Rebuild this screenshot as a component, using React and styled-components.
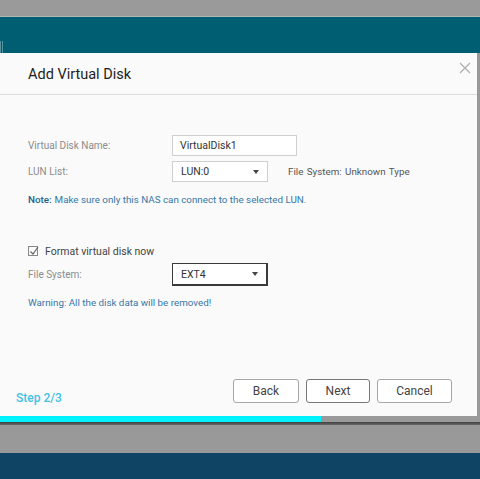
import React from "react";
import styled, { createGlobalStyle } from "styled-components";

const Global = createGlobalStyle`
  html, body { margin: 0; padding: 0; }
  body { width: 480px; height: 479px; overflow: hidden; background: #0f4464; font-family: Roboto, "Liberation Sans", sans-serif; }
`;

const Page = styled.div`
  display: flex;
  flex-direction: column;
  width: 480px;
  height: 479px;
`;

const TopBand = styled.div`
  height: 16px;
  background: #9a9a9a;
  border-bottom: 1px solid #b4b4b4;
`;

const TealBand = styled.div`
  height: 36px;
  background: #005e72;
  position: relative;
`;

const Stage = styled.div`
  display: flex;
  background: #999;
`;

const Dialog = styled.div`
  width: 477px;
  height: 369px;
  background: #fafafa;
  display: flex;
  flex-direction: column;
  position: relative;
`;

const Header = styled.div`
  border-bottom: 1px solid #dcdcdc;
  display: flex;
  align-items: center;
  padding-left: 28px;
  padding-top: 1px;
  box-sizing: border-box;
  height: 42px;
`;

const Title = styled.h1`
  margin: 0;
  font-size: 14.5px;
  font-weight: 400;
  color: #1e1e1e;
`;

const Close = styled.button`
  position: absolute;
  top: 8px;
  right: 5px;
  width: 14px;
  height: 14px;
  border: 0;
  padding: 0;
  background: none;
  display: flex;
`;

const Body = styled.div`
  flex: 1;
  padding: 40px 0 0 28px;
  display: flex;
  flex-direction: column;
`;

const Row = styled.div`
  display: flex;
  align-items: center;
  height: ${(p) => p.$h || 21}px;
  margin-top: ${(p) => p.$mt || 0}px;
`;

const Label = styled.div`
  width: 144px;
  font-size: 10px;
  color: #8c8c8c;
`;

const TextInput = styled.div`
  width: 125px;
  height: 21px;
  box-sizing: border-box;
  border: 1px solid #cfcfcf;
  background: #fff;
  font-size: 10.5px;
  color: #333;
  display: flex;
  align-items: center;
  padding-left: 7px;
`;

const Select = styled.div`
  width: 96px;
  height: ${(p) => (p.$focus ? 23 : 21)}px;
  box-sizing: border-box;
  border: 1px solid ${(p) => (p.$focus ? "#3a3a3a" : "#cfcfcf")};
  border-right-width: ${(p) => (p.$focus ? 2 : 1)}px;
  border-bottom-width: ${(p) => (p.$focus ? 2 : 1)}px;
  background: #fff;
  font-size: 10.5px;
  color: #333;
  display: flex;
  align-items: center;
  justify-content: space-between;
  padding: 0 8px 0 8px;
`;

const Arrow = styled.span`
  width: 0;
  height: 0;
  border-left: 3.5px solid transparent;
  border-right: 3.5px solid transparent;
  border-top: 4px solid #444;
`;

const Info = styled.div`
  margin-left: 20px;
  font-size: 9.8px;
  color: #555;
  word-spacing: 1px;
`;

const Notice = styled.div`
  font-size: 9.8px;
  color: #3677a8;
  margin-top: ${(p) => p.$mt || 0}px;
  height: 14px;
  display: flex;
  align-items: center;
  b { font-weight: 500; color: #1f5f91; margin-right: 3px; }
`;

const CheckRow = styled.label`
  display: flex;
  align-items: center;
  gap: 7px;
  font-size: 10.5px;
  color: #444;
  margin-top: 38px;
  height: 14px;
`;

const Box = styled.span`
  width: 10px;
  height: 10px;
  border: 1px solid #888;
  box-sizing: border-box;
  display: flex;
  position: relative;
  overflow: visible;
`;

const Footer = styled.div`
  display: flex;
  align-items: flex-end;
  justify-content: space-between;
  padding: 0 25px 13px 16px;
`;

const Step = styled.div`
  font-size: 12px;
  font-weight: 500;
  color: #3ec3e3;
  margin-bottom: -2px;
`;

const Buttons = styled.div`
  display: flex;
  gap: 7px;
`;

const Button = styled.button`
  width: ${(p) => p.$w}px;
  height: 24px;
  border: 1px solid ${(p) => (p.$primary ? "#777" : "#a6a6a6")};
  border-radius: 3px;
  background: #fff;
  font-family: inherit;
  font-size: 12px;
  color: #444;
  padding: 0;
`;

const Progress = styled.div`
  height: 6px;
  background: #9a9a9a;
  display: flex;
`;

const Fill = styled.div`
  background: #00f2ff;
  height: 100%;
`;

const Shadow = styled.div`
  height: 3px;
  background: linear-gradient(#3e3e3e, #6a6a6a);
`;

const GrayBand = styled.div`
  height: 28px;
  background: #999;
`;

const BlueBand = styled.div`
  flex: 1;
  background: #0f4464;
`;

const Tick = styled.div`
  position: absolute;
  left: 0;
  bottom: 0;
  width: 3px;
  height: 12px;
  background: linear-gradient(90deg, #8fb6bf 0 1px, transparent 1px 2px, #8fb6bf 2px);
  opacity: 0.6;
`;

export default function App() {
  const step = 2, total = 3;
  return (
    <>
      <Global />
      <Page>
        <TopBand />
        <TealBand>
          <Tick />
        </TealBand>
        <Stage>
          <Dialog>
            <Header>
              <Title>Add Virtual Disk</Title>
            </Header>
            <Close aria-label="close">
              <svg width="14" height="14" viewBox="0 0 14 14">
                <path d="M2 2 L12 12 M12 2 L2 12" stroke="#b0b0b0" strokeWidth="1.3" />
              </svg>
            </Close>
            <Body>
              <Row>
                <Label>Virtual Disk Name:</Label>
                <TextInput>VirtualDisk1</TextInput>
              </Row>
              <Row $mt={5}>
                <Label>LUN List:</Label>
                <Select>
                  LUN:0
                  <Arrow />
                </Select>
                <Info>File System: Unknown Type</Info>
              </Row>
              <Notice $mt={10}>
                <b>Note:</b> Make sure only this NAS can connect to the selected LUN.
              </Notice>
              <CheckRow>
                <Box>
                  <svg width="12" height="12" viewBox="0 0 12 12" style={{ position: "absolute", left: -1, top: -2 }}>
                    <path d="M2.5 6.5 L5 9 L10 2" stroke="#666" strokeWidth="1.2" fill="none" />
                  </svg>
                </Box>
                Format virtual disk now
              </CheckRow>
              <Row $h={23} $mt={5}>
                <Label>File System:</Label>
                <Select $focus>
                  EXT4
                  <Arrow />
                </Select>
              </Row>
              <Notice $mt={9}>Warning: All the disk data will be removed!</Notice>
            </Body>
            <Footer>
              <Step>Step {step}/{total}</Step>
              <Buttons>
                <Button $w={66}>Back</Button>
                <Button $w={64} $primary>Next</Button>
                <Button $w={75}>Cancel</Button>
              </Buttons>
            </Footer>
            <Progress>
              <Fill style={{ width: `${(321 / 477) * 100}%` }} />
            </Progress>
          </Dialog>
        </Stage>
        <Shadow />
        <GrayBand />
        <BlueBand />
      </Page>
    </>
  );
}
